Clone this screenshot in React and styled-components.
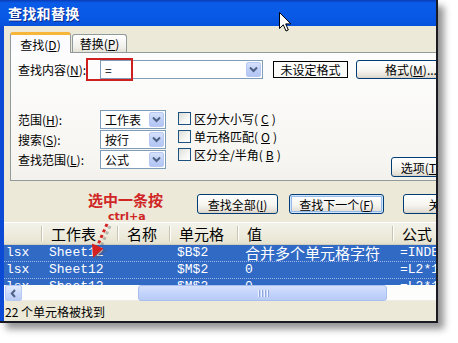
import React from "react";
import styled, { createGlobalStyle, css } from "styled-components";

const CJK = `"Noto Sans CJK SC", "Liberation Sans", sans-serif`;
const MONO = `"Liberation Mono", "Noto Sans CJK SC", monospace`;

const GlobalStyle = createGlobalStyle`
  html, body { margin: 0; padding: 0; background: #fff; }
  body { width: 458px; height: 343px; overflow: hidden; font-family: ${CJK}; }
  u { text-decoration: underline; text-underline-offset: 1px; }
`;

const Page = styled.div`
  width: 458px;
  height: 343px;
  background: #fff;
`;

const Window = styled.div`
  position: relative;
  width: 438px;
  height: 323px;
  box-sizing: border-box;
  display: flex;
  flex-direction: column;
  border-right: 2px solid #1a1a22;
  border-bottom: 2px solid #1a1a22;
  box-shadow: 6px 6px 7px rgba(0, 0, 0, 0.42);
  overflow: hidden;
  background: #ece9d8;
`;

const TitleBar = styled.div`
  flex: none;
  height: 26px;
  display: flex;
  align-items: center;
  padding-left: 8px;
  background: linear-gradient(#0a3cb8 0, #0a5ce8 3px, #0959e6 60%, #0552dc 100%);
  color: #fff;
  font: bold 14px ${CJK};
  letter-spacing: 0.3px;
  text-shadow: 1px 1px 0 #0b2a8e;
`;

const Frame = styled.div`
  flex: 1;
  min-height: 0;
  display: flex;
  flex-direction: column;
  border-left: 4px solid #0b4ad4;
  background: #ece9d8;
`;

const Upper = styled.div`
  flex: none;
  padding: 6px 0 0 6px;
  width: 480px;
`;

const Tabs = styled.div`
  display: flex;
  align-items: flex-end;
  height: 21px;
  position: relative;
  z-index: 2;
`;

const Tab = styled.div`
  box-sizing: border-box;
  display: flex;
  align-items: center;
  justify-content: center;
  font: 12px ${CJK};
  color: #000;
  border: 1px solid #919b9c;
  border-radius: 3px 3px 0 0;
  ${(p) =>
    p.$active
      ? css`
          width: 61px;
          height: 21px;
          border-top: 3px solid #f7b53a;
          border-bottom: none;
          background: #fcfcfe;
          padding-top: 1px;
        `
      : css`
          width: 55px;
          height: 18px;
          margin-bottom: 1px;
          margin-left: 1px;
          border-bottom: none;
          background: linear-gradient(#ffffff, #f1f0ea 70%, #e4e2d8);
        `}
`;

const Panel = styled.div`
  position: relative;
  z-index: 1;
  margin-top: -1px;
  width: 464px;
  height: 129px;
  box-sizing: border-box;
  border: 1px solid #919b9c;
  background: linear-gradient(#fdfdfe, #f7f6f2 80%, #f2f1ec);
  padding: 7px 7px 3px;
  display: flex;
  flex-direction: column;
`;

const FindRow = styled.div`
  display: flex;
  align-items: center;
  height: 19px;
`;

const Label = styled.span`
  flex: none;
  width: 82px;
  font: 12px ${CJK};
  color: #000;
  white-space: nowrap;
`;

const Combo = styled.div`
  flex: none;
  width: ${(p) => p.$w}px;
  height: 19px;
  box-sizing: border-box;
  border: 1px solid #7f9db9;
  background: #fff;
  display: flex;
  align-items: center;
  padding-left: 4px;
  font: 12px ${CJK};
  color: #000;
`;

const ComboText = styled.span`
  flex: 1;
  white-space: nowrap;
`;

const DropBtn = styled.span`
  flex: none;
  width: 15px;
  height: 15px;
  margin-right: 1px;
  box-sizing: border-box;
  border: 1px solid #b7c9f2;
  border-radius: 2px;
  background: linear-gradient(#d6e1fb, #bccdf6 60%, #b3c6f4);
  display: flex;
  align-items: center;
  justify-content: center;
`;

const FormatBox = styled.div`
  flex: none;
  margin-left: 10px;
  width: 75px;
  height: 17px;
  box-sizing: border-box;
  border: 1px solid #000;
  background: #fbfbfa;
  display: flex;
  align-items: center;
  justify-content: center;
  font: 12px ${CJK};
  color: #000;
`;

const Btn = styled.div`
  flex: none;
  width: ${(p) => p.$w}px;
  height: ${(p) => p.$h || 20}px;
  margin-left: ${(p) => p.$ml || 0}px;
  box-sizing: border-box;
  border: 1px solid #003c74;
  border-radius: 3px;
  background: linear-gradient(#ffffff, #f6f5f0 55%, #e3e0d6 90%, #d6d0c5);
  display: flex;
  align-items: center;
  justify-content: center;
  font: 12px ${CJK};
  color: #000;
  white-space: nowrap;
  ${(p) =>
    p.$default &&
    css`
      box-shadow: inset 0 0 0 1px #cee7ff, inset 0 0 0 2px #98b8ea;
    `}
`;

const Options = styled.div`
  display: flex;
  margin-top: 30px;
  height: 68px;
`;

const SelGrid = styled.div`
  flex: none;
  display: grid;
  grid-template-columns: 82px 66px;
  grid-auto-rows: 20px;
  align-items: center;
  align-self: flex-start;
`;

const CheckList = styled.div`
  flex: none;
  margin-left: 12px;
  display: grid;
  grid-auto-rows: 18px;
  align-items: center;
  align-self: flex-start;
`;

const CheckRow = styled.label`
  display: flex;
  align-items: center;
  gap: 3px;
  font: 12px ${CJK};
  color: #000;
  white-space: nowrap;
`;

const Box = styled.span`
  width: 13px;
  height: 13px;
  box-sizing: border-box;
  border: 1px solid #1c5180;
  background: linear-gradient(135deg, #dcdcd7, #f6f6f4 60%, #ffffff);
`;

const OptBtn = styled(Btn)`
  margin-left: auto;
  align-self: flex-end;
`;

const ActionRow = styled.div`
  margin-top: 13px;
  width: 468px;
  height: 20px;
  display: flex;
  justify-content: flex-end;
`;

const COLS = "38px 76px 52px 68px 155px 140px";

const ListHeader = styled.div`
  flex: none;
  margin-top: 8px;
  height: 23px;
  width: 529px;
  display: grid;
  grid-template-columns: ${COLS};
  background: linear-gradient(#f4f3ec, #ece9d8 70%, #e2dfcf);
  box-shadow: inset 0 1px 0 #fff, inset 0 -1px 0 #d2cebe;
`;

const HeadCell = styled.div`
  position: relative;
  display: flex;
  align-items: flex-end;
  padding: 0 0 3px 9px;
  font: 15px/16px ${CJK};
  color: #000;
  white-space: nowrap;
  &::after {
    content: "";
    position: absolute;
    right: 0;
    top: 4px;
    bottom: 4px;
    width: 1px;
    background: #c7c5b2;
    box-shadow: 1px 0 0 #fff;
  }
`;

const Rows = styled.div`
  flex: none;
  height: 40px;
  overflow: hidden;
  background: #fff;
`;

const Row = styled.div`
  height: 17px;
  width: 529px;
  box-sizing: border-box;
  display: grid;
  grid-template-columns: ${COLS};
  align-items: center;
  background: #316ac5;
  border-bottom: 1px dotted #9fb6e3;
  color: #fff;
`;

const Cell = styled.div`
  padding-left: ${(p) => (p.$first ? 2 : 7)}px;
  font: ${(p) => (p.$cjk ? `15px/16px ${CJK}` : `13px/16px ${MONO}`)};
  white-space: nowrap;
  overflow: hidden;
`;

const HScroll = styled.div`
  flex: none;
  height: 16px;
  width: 529px;
  display: flex;
  align-items: stretch;
  background: #fdfdfb;
  box-shadow: inset 0 -1px 0 #eeede5;
`;

const ScrollBtn = styled.div`
  flex: none;
  width: 17px;
  margin-left: 1px;
  box-sizing: border-box;
  border: 1px solid #b8c9f2;
  border-radius: 2px;
  background: linear-gradient(#e2eafe, #c7d6fb 60%, #bacbf5);
  display: flex;
  align-items: center;
  justify-content: center;
`;

const Track = styled.div`
  flex: none;
  width: ${(p) => p.$w}px;
`;

const Thumb = styled.div`
  flex: none;
  width: 249px;
  box-sizing: border-box;
  border: 1px solid #a9bff0;
  border-radius: 3px;
  background: linear-gradient(#d5e0fc, #c4d4fb 50%, #b8cbf6);
  display: flex;
  align-items: center;
  justify-content: center;
  gap: 2px;
`;

const Grip = styled.span`
  width: 1px;
  height: 7px;
  background: #eef3ff;
  box-shadow: 1px 0 0 #8ca5dd;
`;

const Status = styled.div`
  flex: 1;
  display: flex;
  align-items: center;
  padding-left: 1px;
  font: 12px ${CJK};
  color: #000;
  white-space: nowrap;
`;

const Overlay = styled.div`
  position: absolute;
  inset: 0;
  pointer-events: none;
  z-index: 5;
`;

const RedBox = styled.div`
  position: absolute;
  left: 86px;
  top: 58px;
  width: 47px;
  height: 23px;
  box-sizing: border-box;
  border: 2px solid #cf2020;
`;

const Note = styled.div`
  position: absolute;
  left: ${(p) => p.$x}px;
  top: ${(p) => p.$y}px;
  color: #d02626;
  font-weight: bold;
  white-space: nowrap;
  ${(p) =>
    p.$small
      ? css`
          font: bold 11px/12px "DejaVu Sans", sans-serif;
        `
      : css`
          font: bold 15px/18px ${CJK};
        `}
`;

const Abs = styled.svg`
  position: absolute;
  left: ${(p) => p.$x}px;
  top: ${(p) => p.$y}px;
  overflow: visible;
`;

const Chevron = ({ dir = "down" }) =>
  dir === "down" ? (
    <svg width="9" height="7" viewBox="0 0 9 7">
      <path d="M1 1.5 L4.5 5 L8 1.5" fill="none" stroke="#4d6185" strokeWidth="2" />
    </svg>
  ) : (
    <svg width="7" height="9" viewBox="0 0 7 9">
      <path d="M5 1 L1.8 4.5 L5 8" fill="none" stroke="#4d6185" strokeWidth="2" />
    </svg>
  );

const Select = ({ w, children }) => (
  <Combo $w={w}>
    <ComboText>{children}</ComboText>
    <DropBtn>
      <Chevron />
    </DropBtn>
  </Combo>
);

const rows = [
  ["lsx", "Sheet12", "", "$B$2", "合并多个单元格字符", "=INDEX"],
  ["lsx", "Sheet12", "", "$M$2", "0", "=L2*1"],
  ["lsx", "Sheet12", "", "$M$2", "0", "=L2*1"],
];

export default function App() {
  return (
    <Page>
      <GlobalStyle />
      <Window>
        <TitleBar>查找和替换</TitleBar>
        <Frame>
          <Upper>
            <Tabs>
              <Tab $active>
                查找(<u>D</u>)
              </Tab>
              <Tab>
                替换(<u>P</u>)
              </Tab>
            </Tabs>
            <Panel>
              <FindRow>
                <Label>
                  查找内容(<u>N</u>):
                </Label>
                <Select w={163}>=</Select>
                <FormatBox>未设定格式</FormatBox>
                <Btn $w={110} $h={19} $ml={8}>
                  格式(<u>M</u>)...
                </Btn>
              </FindRow>
              <Options>
                <SelGrid>
                  <Label>
                    范围(<u>H</u>):
                  </Label>
                  <Select w={66}>工作表</Select>
                  <Label>
                    搜索(<u>S</u>):
                  </Label>
                  <Select w={66}>按行</Select>
                  <Label>
                    查找范围(<u>L</u>):
                  </Label>
                  <Select w={66}>公式</Select>
                </SelGrid>
                <CheckList>
                  <CheckRow>
                    <Box />
                    区分大小写(<u>C</u>)
                  </CheckRow>
                  <CheckRow>
                    <Box />
                    单元格匹配(<u>O</u>)
                  </CheckRow>
                  <CheckRow>
                    <Box />
                    区分全/半角(<u>B</u>)
                  </CheckRow>
                </CheckList>
                <OptBtn $w={75}>
                  选项(<u>T</u>) &lt;&lt;
                </OptBtn>
              </Options>
            </Panel>
            <ActionRow>
              <Btn $w={81}>
                查找全部(<u>I</u>)
              </Btn>
              <Btn $w={95} $ml={11} $default>
                查找下一个(<u>F</u>)
              </Btn>
              <Btn $w={75} $ml={19}>
                关闭
              </Btn>
            </ActionRow>
          </Upper>
          <ListHeader>
            <HeadCell />
            <HeadCell>工作表</HeadCell>
            <HeadCell>名称</HeadCell>
            <HeadCell>单元格</HeadCell>
            <HeadCell>值</HeadCell>
            <HeadCell>公式</HeadCell>
          </ListHeader>
          <Rows>
            {rows.map((r, i) => (
              <Row key={i}>
                <Cell $first>{r[0]}</Cell>
                <Cell>{r[1]}</Cell>
                <Cell>{r[2]}</Cell>
                <Cell>{r[3]}</Cell>
                <Cell $cjk={/[\u4e00-\u9fff]/.test(r[4])}>{r[4]}</Cell>
                <Cell>{r[5]}</Cell>
              </Row>
            ))}
          </Rows>
          <HScroll>
            <ScrollBtn>
              <Chevron dir="left" />
            </ScrollBtn>
            <Track $w={116} />
            <Thumb>
              <Grip />
              <Grip />
              <Grip />
              <Grip />
            </Thumb>
          </HScroll>
          <Status>22 个单元格被找到</Status>
        </Frame>

        <Overlay>
          <RedBox />
          <Note $x={88} $y={191}>
            选中一条按
          </Note>
          <Note $x={108} $y={211} $small>
            ctrl+a
          </Note>
          <Abs $x={85} $y={220} width="30" height="42">
            <g transform="translate(3,2)" opacity="0.35">
              <line x1="22" y1="4" x2="12" y2="27" stroke="#555" strokeWidth="3" strokeDasharray="3 3" />
              <polygon points="8,38 18.5,28.5 7,23.5" fill="#555" />
            </g>
            <line x1="22" y1="4" x2="12" y2="27" stroke="#d42020" strokeWidth="3" strokeDasharray="3 3" />
            <polygon points="8,38 18.5,28.5 7,23.5" fill="#d42020" />
          </Abs>
          <Abs $x={279} $y={12} width="13" height="21" viewBox="0 0 13 21">
            <path
              d="M0.5 0.5 L0.5 16.5 L4.3 12.8 L7 19 L9.3 18 L6.7 11.9 L11.8 11.9 Z"
              fill="#fff"
              stroke="#000"
              strokeWidth="1"
              strokeLinejoin="round"
            />
          </Abs>
        </Overlay>
      </Window>
    </Page>
  );
}
